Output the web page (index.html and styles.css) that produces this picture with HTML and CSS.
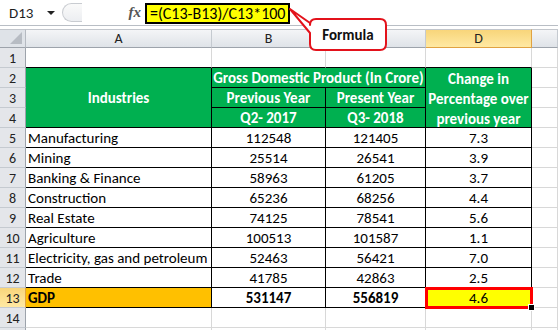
FILE: index.html
```html
<!DOCTYPE html>
<html lang="en">
<head>
    <meta charset="UTF-8">
    <title>GDP Change - Excel</title>
    <link rel="stylesheet" href="styles.css">
</head>
<body>
    <div class="app">
        <div class="formula-bar">
            <div class="name-box">
                <span>D13</span>
                <span class="drop"></span>
            </div>
            <div class="grip"><span></span></div>
            <div class="fx">fx</div>
            <div class="formula">=(C13-B13)/C13*100</div>
        </div>
        <div class="bar-gap"></div>

        <div class="sheet">
            <!-- column headers -->
            <div class="corner"><span></span></div>
            <div class="col-head">A</div>
            <div class="col-head">B</div>
            <div class="col-head">C</div>
            <div class="col-head active">D</div>
            <div class="col-head"></div>

            <!-- row 1 -->
            <div class="row-head">1</div>
            <div class="cell top"></div>
            <div class="cell top"></div>
            <div class="cell top"></div>
            <div class="cell top"></div>
            <div class="cell"></div>

            <!-- rows 2-4: header block -->
            <div class="row-head">2</div>
            <div class="cell head tall">Industries</div>
            <div class="cell head wide">Gross Domestic Product (In Crore)</div>
            <div class="cell head tall wrap">Change in Percentage over previous year</div>
            <div class="cell"></div>

            <div class="row-head">3</div>
            <div class="cell head">Previous Year</div>
            <div class="cell head">Present Year</div>
            <div class="cell"></div>

            <div class="row-head">4</div>
            <div class="cell head">Q2- 2017</div>
            <div class="cell head">Q3- 2018</div>
            <div class="cell"></div>

            <div class="row-head">5</div>
            <div class="cell b name">Manufacturing</div>
            <div class="cell b">112548</div>
            <div class="cell b">121405</div>
            <div class="cell b">7.3</div>
            <div class="cell"></div>

            <div class="row-head">6</div>
            <div class="cell b name">Mining</div>
            <div class="cell b">25514</div>
            <div class="cell b">26541</div>
            <div class="cell b">3.9</div>
            <div class="cell"></div>

            <div class="row-head">7</div>
            <div class="cell b name">Banking &amp; Finance</div>
            <div class="cell b">58963</div>
            <div class="cell b">61205</div>
            <div class="cell b">3.7</div>
            <div class="cell"></div>

            <div class="row-head">8</div>
            <div class="cell b name">Construction</div>
            <div class="cell b">65236</div>
            <div class="cell b">68256</div>
            <div class="cell b">4.4</div>
            <div class="cell"></div>

            <div class="row-head">9</div>
            <div class="cell b name">Real Estate</div>
            <div class="cell b">74125</div>
            <div class="cell b">78541</div>
            <div class="cell b">5.6</div>
            <div class="cell"></div>

            <div class="row-head">10</div>
            <div class="cell b name">Agriculture</div>
            <div class="cell b">100513</div>
            <div class="cell b">101587</div>
            <div class="cell b">1.1</div>
            <div class="cell"></div>

            <div class="row-head">11</div>
            <div class="cell b name">Electricity, gas and petroleum</div>
            <div class="cell b">52463</div>
            <div class="cell b">56421</div>
            <div class="cell b">7.0</div>
            <div class="cell"></div>

            <div class="row-head">12</div>
            <div class="cell b name">Trade</div>
            <div class="cell b">41785</div>
            <div class="cell b">42863</div>
            <div class="cell b">2.5</div>
            <div class="cell"></div>

            <div class="row-head active">13</div>
            <div class="cell b name total gdp">GDP</div>
            <div class="cell b total">531147</div>
            <div class="cell b total">556819</div>
            <div class="cell b selected">4.6</div>
            <div class="cell"></div>

            <div class="row-head">14</div>
            <div class="cell"></div>
            <div class="cell"></div>
            <div class="cell"></div>
            <div class="cell"></div>
            <div class="cell"></div>

            <div class="row-head"></div>
            <div class="cell"></div>
            <div class="cell"></div>
            <div class="cell"></div>
            <div class="cell"></div>
            <div class="cell"></div>
        </div>

        <!-- callout pointing at the formula -->
        <svg class="callout" width="558" height="60" viewBox="0 0 558 60">
            <path d="M316 19 H380 Q386 19 386 25 V44 Q386 50 380 50 H316 Q310 50 310 44 V33 L290 9 L310 23 V25 Q310 19 316 19 Z"
                  fill="#fff" stroke="#e3121b" stroke-width="2" stroke-linejoin="round"/>
            <text x="348" y="40" text-anchor="middle" class="callout-text">Formula</text>
        </svg>
    </div>
</body>
</html>
```

FILE: styles.css
```css
* {
    margin: 0;
    padding: 0;
    box-sizing: border-box;
}

body {
    font-family: Carlito, Lato, 'Liberation Sans', sans-serif;
    background: #fff;
    width: 558px;
    height: 330px;
    overflow: hidden;
}

.app {
    position: relative;
    width: 558px;
    height: 330px;
    overflow: hidden;
}

/* formula bar */
.formula-bar {
    height: 26px;
    display: flex;
    align-items: stretch;
    background: #fff;
    border-bottom: 1px solid #b9bec5;
}

.name-box {
    width: 61px;
    display: flex;
    align-items: center;
    justify-content: space-between;
    padding: 0 6px 0 9px;
    font-size: 15px;
    color: #1e1e1e;
}

.drop {
    width: 0;
    height: 0;
    border-left: 4px solid transparent;
    border-right: 4px solid transparent;
    border-top: 4px solid #222;
}

.grip {
    width: 40px;
    padding: 3px 0 3px 1px;
}

.grip span {
    display: block;
    width: 20px;
    height: 19px;
    border: 1px solid #c9ccd1;
    border-right: none;
    border-radius: 10px 0 0 10px;
    background: linear-gradient(#fafafa, #eceef1);
}

.fx {
    width: 44px;
    text-align: right;
    padding-right: 4px;
    font-family: 'Liberation Serif', serif;
    font-style: italic;
    font-weight: bold;
    font-size: 15px;
    line-height: 24px;
    color: #555;
}

.formula {
    margin-top: 3px;
    height: 21px;
    width: 145px;
    background: #ffff00;
    border: 2px solid #000;
    font-size: 16px;
    line-height: 17px;
    padding-left: 3px;
    color: #000;
    white-space: nowrap;
}

.bar-gap {
    height: 3px;
    background: #fff;
}

/* grid */
.sheet {
    display: grid;
    grid-template-columns: 26px 186px 114px 100px 106px 26px;
    grid-template-rows: 19px;
    grid-auto-rows: 20px;
    font-size: 15px;
    color: #000;
}

.corner {
    background: #dfe3e8;
    border-right: 1px solid #b5bac1;
    border-bottom: 1px solid #9da3ab;
    border-top: 1px solid #c2c6cc;
    position: relative;
}

.corner span {
    position: absolute;
    right: 3px;
    bottom: 3px;
    width: 0;
    height: 0;
    border-left: 12px solid transparent;
    border-bottom: 12px solid #b7bcc3;
}

.col-head {
    background: linear-gradient(#f4f5f7, #dfe3e8);
    border-top: 1px solid #c2c6cc;
    border-right: 1px solid #c5cad0;
    border-bottom: 1px solid #9da3ab;
    text-align: center;
    font-size: 14px;
    line-height: 18px;
    color: #222;
}

.col-head.active {
    background: linear-gradient(#f8d57a, #ffe9a3);
    border-bottom: 1px solid #e0a242;
    border-right: 1px solid #e0a242;
}

.row-head {
    background: #e4e6ea;
    border-right: 1px solid #9da3ab;
    border-bottom: 1px solid #c5cad0;
    text-align: center;
    font-size: 14px;
    line-height: 19px;
    padding-top: 1px;
    color: #222;
}

.row-head.active {
    background: linear-gradient(#f8d57a, #ffe9a3);
    border-right: 1px solid #e0a242;
}

.cell {
    border-right: 1px solid #d8d8d8;
    border-bottom: 1px solid #d8d8d8;
    line-height: 19px;
    padding-top: 1px;
    text-align: center;
    white-space: nowrap;
}

.cell.top {
    border-bottom-color: #000;
}

.cell.b {
    border-right-color: #000;
    border-bottom-color: #000;
}

.cell.name {
    text-align: left;
    padding-left: 2px;
}

.cell.head {
    background: #00b050;
    color: #fff;
    font-weight: bold;
    border-right-color: #000;
    border-bottom-color: #000;
}

.cell.tall {
    grid-row: span 3;
    display: flex;
    align-items: center;
    justify-content: center;
}

.cell.wide {
    grid-column: span 2;
}

.cell.wrap {
    white-space: normal;
    line-height: 20px;
    padding-top: 2px;
}

.cell.total {
    font-weight: bold;
}

.cell.gdp {
    background: #ffc000;
}

.cell.selected {
    position: relative;
    background: #ffff00;
    outline: 3px solid #ff0000;
    outline-offset: -2px;
    z-index: 1;
}

.cell.selected::after {
    content: "";
    position: absolute;
    right: -4px;
    bottom: -4px;
    width: 5px;
    height: 5px;
    background: #000;
    border: 1px solid #fff;
}

/* callout */
.callout {
    position: absolute;
    left: 0;
    top: 0;
}

.callout-text {
    font-family: Carlito, Lato, 'Liberation Sans', sans-serif;
    font-weight: bold;
    font-size: 15px;
    fill: #111;
}
```
